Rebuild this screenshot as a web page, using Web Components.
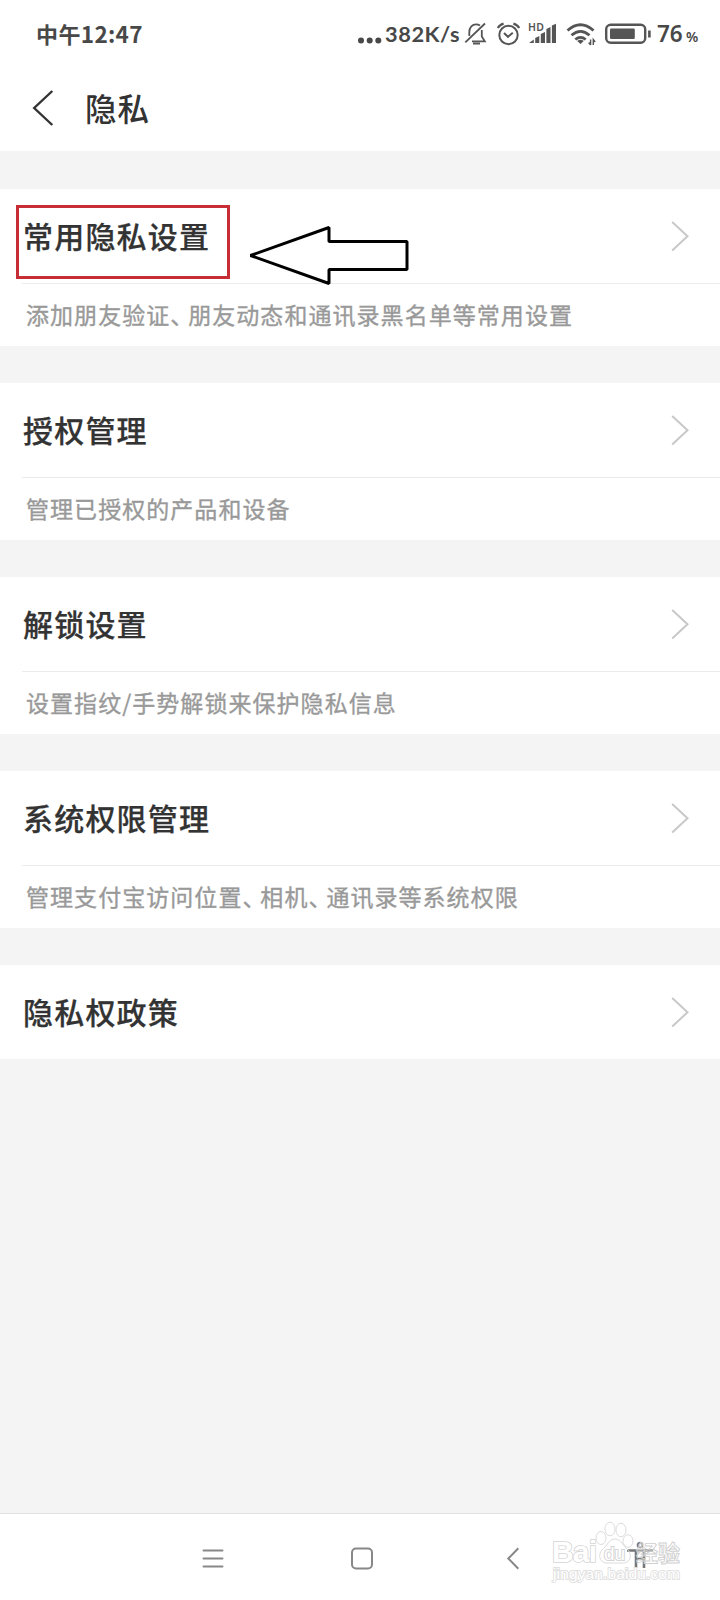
<!DOCTYPE html>
<html lang="zh-CN">
<head>
<meta charset="utf-8">
<title>隐私</title>
<style>
html,body{margin:0;padding:0}
body{width:720px;height:1600px;overflow:hidden;background:#f4f4f4;font-family:"Noto Sans CJK SC",sans-serif;color:#333}
</style>
</head>
<body>
<privacy-screen></privacy-screen>
<script>
function define(name, html) {
  const t = document.createElement('template');
  t.innerHTML = html;
  customElements.define(name, class extends HTMLElement {
    constructor() {
      super();
      this.attachShadow({mode: 'open'}).appendChild(t.content.cloneNode(true));
    }
  });
}

define('status-bar', `
<style>
:host{display:flex;height:68px;box-sizing:border-box;padding:0 23px 0 36px;align-items:center;color:#484848;font-weight:700}
.time{font-size:22px;line-height:30px;white-space:nowrap;padding-bottom:2px;letter-spacing:.4px}
.time span{font-family:"Noto Sans CJK SC",sans-serif;font-size:22.5px;letter-spacing:.3px}
.spacer{flex:1}
.speed{font:700 21.8px/30px Lato,sans-serif;letter-spacing:.55px;width:75px;margin:0 3px 0 1px;white-space:nowrap}
.pct{font:600 22.5px/30px "Noto Sans",sans-serif;width:29px;margin-left:4px;white-space:nowrap}
.sign{font:600 14px/30px "Noto Sans",sans-serif;width:11px;padding-top:5px}
svg{display:block;flex:none}
</style>
<div class="time">中午<span>12:47</span></div>
<div class="spacer"></div>
<svg width="27" height="40" viewBox="357 14 27 40"><g fill="#484848"><circle cx="361" cy="40.5" r="3"/><circle cx="369.7" cy="40.5" r="3"/><circle cx="378.3" cy="40.5" r="3"/></g></svg>
<div class="speed">382K/s</div>
<svg width="190" height="40" viewBox="463 14 190 40" fill="none" stroke="#555" stroke-width="1.8">
<path d="M469.3 36V32C469.3 27 472.5 24.3 476 24.3C477.8 24.3 479 24.8 480 25.5M481.8 30V36.5L484.8 41.3H472M465.3 42.3L485 23.5"/><path d="M473 43.5H480" stroke-width="2"/>
<circle cx="508.5" cy="35" r="9.2" stroke-width="2"/><path d="M504 33L508 36.8 512.8 32.8" stroke-width="2"/><path d="M497.8 28Q499.5 24.8 503.6 23.6M513.4 23.6Q517.5 24.8 519.2 28" stroke-width="2.2"/>
<g fill="#555" stroke="none"><path d="M529 43L533.8 39.5V43ZM535.2 38L539.3 36V43H535.2ZM540.8 34L545 32V43H540.8ZM546.4 29L550.5 27V43H546.4ZM551.9 25.5L556 23.8V43H551.9Z"/></g>
<g stroke-width="2.8"><path d="M567.5 30.5Q580.5 19 593.5 30.5M571.5 35.3Q580.5 27.5 589.5 35.3M575.3 39.5Q580.5 35.3 585.7 39.5"/></g>
<path d="M577.2 41Q580.5 38.5 583.8 41L580.5 44Z" fill="#555" stroke="none"/>
<path d="M590.6 39.5V45M588.7 42.5L590.6 45M593.3 45V39.5L595.2 42" stroke-width="1.4"/>
<rect x="606.2" y="24.7" width="39" height="18" rx="4.5" stroke-width="2.4"/><rect x="610" y="28.5" width="24.8" height="10.5" rx="1.2" fill="#555" stroke="none"/><path d="M649.4 30.5V37.5" stroke-width="2.6"/>
<text x="528" y="30.5" font-family="Noto Sans" font-weight="600" font-size="10.5" letter-spacing=".2" fill="#555" stroke="none">HD</text>
</svg>
<div class="pct">76</div><div class="sign">%</div>
`);

define('title-bar', `
<style>
:host{display:flex;height:83px;align-items:center;padding-left:32px}
svg{display:block;margin:0 31px 4px 0}
h1{margin:0;font-size:31.5px;line-height:40px;font-weight:500;letter-spacing:1px;padding-bottom:6px}
</style>
<svg width="22" height="38" viewBox="32 88 22 38"><path d="M52.3 90L34.2 107 52.3 124" fill="none" stroke="#333" stroke-width="2.4"/></svg>
<h1><slot></slot></h1>
`);

define('setting-item', `
<style>
:host{display:block;background:#fff}
.row{display:flex;height:94px;align-items:center;justify-content:space-between;padding:0 30px 0 23px}
.name{font-size:30px;line-height:40px;font-weight:500;letter-spacing:1.2px;color:#333;padding-bottom:2px;-webkit-text-stroke:.25px #333}
svg{display:block}
::slotted([slot=note]){display:block;box-sizing:border-box;height:63px;margin-left:22px;padding-left:4px;border-top:1px solid #ececec;font-size:23px;line-height:60px;letter-spacing:1.05px;color:#999;white-space:nowrap;-webkit-text-stroke:.35px #999}
</style>
<div class="row"><div class="name"><slot></slot></div>
<svg width="20" height="32" viewBox="0 0 20 32"><path d="M2.2 2L17.5 16.3 2.2 30.6" fill="none" stroke="#c8c8c8" stroke-width="2"/></svg></div>
<slot name="note"></slot>
`);

define('enum-comma', `<style>:host{letter-spacing:-5.1px}</style><slot></slot>`);

define('mark-overlay', `
<style>
:host{position:absolute;left:0;top:190px;pointer-events:none}
svg{display:block}
</style>
<svg width="430" height="110" viewBox="0 190 430 110" fill="none"><rect x="17.5" y="206.5" width="211" height="71" stroke="#c62d34" stroke-width="3"/><path d="M250.5 255.5L329 227.5V241.5H407V269.5H329V283.5Z" fill="#fff" stroke="#000" stroke-width="3" stroke-linejoin="bevel"/></svg>
`);

define('nav-bar', `
<style>
:host{display:grid;grid-template-columns:138px 150px 148px 154px 100px 30px;height:87px;box-sizing:border-box;border-top:1px solid #e2e2e2;background:#fff;align-items:center;justify-items:center;padding-top:3px}
svg{display:block}
.person{margin-bottom:7px}
</style>
<span></span>
<svg width="22" height="24" viewBox="0 0 22 24"><path d="M1.5 3.5H20.5M1.5 11.5H20.5M1.5 19.5H20.5" stroke="#888" stroke-width="2" stroke-linecap="round"/></svg>
<svg width="24" height="24" viewBox="0 0 24 24"><rect x="2" y="1.5" width="20" height="20" rx="4" fill="none" stroke="#888" stroke-width="2"/></svg>
<svg width="14" height="24" viewBox="0 0 14 24"><path d="M12.3 1.3L2.3 11.5 12.3 21.7" fill="none" stroke="#888" stroke-width="2"/></svg>
<svg class="person" width="28" height="28" viewBox="0 0 28 28"><circle cx="14" cy="4" r="2.4" fill="none" stroke="#777" stroke-width="1.8"/><path d="M1 9.5H27M10 9V27M18 9V27M10 18H18" fill="none" stroke="#777" stroke-width="2.6"/></svg>
`);

define('water-mark', `
<style>
:host{position:absolute;left:545px;top:1515px;pointer-events:none}
svg{display:block}
text{font-family:"Liberation Sans","Noto Sans CJK SC",sans-serif}
.o{paint-order:stroke}
</style>
<svg width="145" height="75" viewBox="545 1515 145 75" fill="#fff" stroke="#dcdcdc" stroke-width="1">
<ellipse cx="601" cy="1538" rx="5" ry="6.5"/><ellipse cx="610" cy="1529" rx="5" ry="6.8"/><ellipse cx="621" cy="1530" rx="5" ry="6.8"/><ellipse cx="628" cy="1541" rx="5" ry="6.3" fill="none"/>
<path d="M615 1539C609 1539 607 1546 602 1550C598 1554 599 1562 606 1563H624C631 1562 632 1554 628 1550C623 1546 621 1539 615 1539Z" fill="none"/>
<text x="552" y="1562" font-size="30" font-weight="700" textLength="45" stroke="#d4d4d4" stroke-width="1.6" class="o">Bai</text>
<text x="604" y="1560" font-size="19" stroke="#d4d4d4" stroke-width="2" class="o">du</text>
<text x="636" y="1560.5" font-size="22" font-weight="700" font-family="Noto Sans CJK SC" fill="#fff" fill-opacity=".35" stroke="#d0d0d0" stroke-width=".9">经验</text>
<text x="553" y="1579" font-size="15.5" textLength="127" stroke="#e0e0e0" stroke-width="1.8" class="o">jingyan.baidu.com</text>
</svg>
`);

define('privacy-screen', `
<style>
:host{display:flex;flex-direction:column;height:1600px;width:720px;position:relative;background:#f4f4f4}
header{background:#fff}
main{flex:1;padding-top:38px;display:flex;flex-direction:column;gap:37px}
</style>
<header><status-bar></status-bar><title-bar>隐私</title-bar></header>
<main>
<setting-item>常用隐私设置<span slot="note">添加朋友验证<enum-comma>、</enum-comma>朋友动态和通讯录黑名单等常用设置</span></setting-item>
<setting-item>授权管理<span slot="note">管理已授权的产品和设备</span></setting-item>
<setting-item>解锁设置<span slot="note">设置指纹/手势解锁来保护隐私信息</span></setting-item>
<setting-item>系统权限管理<span slot="note">管理支付宝访问位置<enum-comma>、</enum-comma>相机<enum-comma>、</enum-comma>通讯录等系统权限</span></setting-item>
<setting-item>隐私权政策</setting-item>
</main>
<nav-bar></nav-bar>
<mark-overlay></mark-overlay>
<water-mark></water-mark>
`);
</script>
</body>
</html>
